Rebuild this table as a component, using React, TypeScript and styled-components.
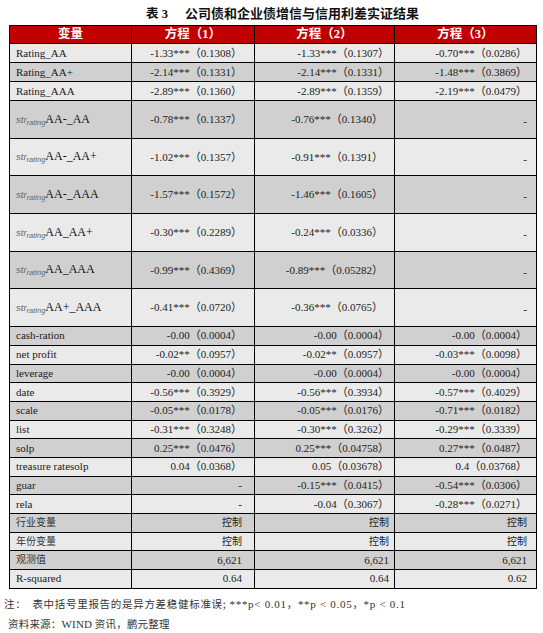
import styled, { createGlobalStyle } from 'styled-components'

const GlobalStyle = createGlobalStyle`
  html, body {
    margin: 0;
    padding: 0;
    background: #ffffff;
  }
  body {
    font-family: 'Liberation Serif', 'Noto Sans CJK SC', serif;
    color: #1a1a1a;
  }
`

type Row = {
  label: string
  str?: boolean
  cjk?: boolean
  values: string[]
}

const rows: Row[] = [
  { label: 'Rating_AA', values: ['-1.33***（0.1308）', '-1.33***（0.1307）', '-0.70***（0.0286）'] },
  { label: 'Rating_AA+', values: ['-2.14***（0.1331）', '-2.14***（0.1331）', '-1.48***（0.3869）'] },
  { label: 'Rating_AAA', values: ['-2.89***（0.1360）', '-2.89***（0.1359）', '-2.19***（0.0479）'] },
  { label: 'AA-_AA', str: true, values: ['-0.78***（0.1337）', '-0.76***（0.1340）', '-'] },
  { label: 'AA-_AA+', str: true, values: ['-1.02***（0.1357）', '-0.91***（0.1391）', '-'] },
  { label: 'AA-_AAA', str: true, values: ['-1.57***（0.1572）', '-1.46***（0.1605）', '-'] },
  { label: 'AA_AA+', str: true, values: ['-0.30***（0.2289）', '-0.24***（0.0336）', '-'] },
  { label: 'AA_AAA', str: true, values: ['-0.99***（0.4369）', '-0.89***（0.05282）', '-'] },
  { label: 'AA+_AAA', str: true, values: ['-0.41***（0.0720）', '-0.36***（0.0765）', '-'] },
  { label: 'cash-ration', values: ['-0.00（0.0004）', '-0.00（0.0004）', '-0.00（0.0004）'] },
  { label: 'net profit', values: ['-0.02**（0.0957）', '-0.02**（0.0957）', '-0.03***（0.0098）'] },
  { label: 'leverage', values: ['-0.00（0.0004）', '-0.00（0.0004）', '-0.00（0.0004）'] },
  { label: 'date', values: ['-0.56***（0.3929）', '-0.56***（0.3934）', '-0.57***（0.4029）'] },
  { label: 'scale', values: ['-0.05***（0.0178）', '-0.05***（0.0176）', '-0.71***（0.0182）'] },
  { label: 'list', values: ['-0.31***（0.3248）', '-0.30***（0.3262）', '-0.29***（0.3339）'] },
  { label: 'solp', values: ['0.25***（0.0476）', '0.25***（0.04758）', '0.27***（0.0487）'] },
  { label: 'treasure ratesolp', values: ['0.04（0.0368）', '0.05（0.03678）', '0.4（0.03768）'] },
  { label: 'guar', values: ['-', '-0.15***（0.0415）', '-0.54***（0.0306）'] },
  { label: 'rela', values: ['-', '-0.04（0.3067）', '-0.28***（0.0271）'] },
  { label: '行业变量', cjk: true, values: ['控制', '控制', '控制'] },
  { label: '年份变量', cjk: true, values: ['控制', '控制', '控制'] },
  { label: '观测值', cjk: true, values: ['6,621', '6,621', '6,621'] },
  { label: 'R-squared', values: ['0.64', '0.64', '0.62'] },
]

// right padding of each value column, normal rows / str rows
const padNormal = [12, 5, 9]
const padStr = [12, 11, 9]

const App = () => {
  return (
    <>
      <GlobalStyle />
      <Page>
        <Title>
          <span>表 3</span>
          <span>公司债和企业债增信与信用利差实证结果</span>
        </Title>
        <Table>
          <colgroup>
            <col style={{ width: 122 }} />
            <col style={{ width: 123 }} />
            <col style={{ width: 140 }} />
            <col style={{ width: 142 }} />
          </colgroup>
          <thead>
            <tr>
              <HeadCell>变量</HeadCell>
              <HeadCell>方程（1）</HeadCell>
              <HeadCell>方程（2）</HeadCell>
              <HeadCell>方程（3）</HeadCell>
            </tr>
          </thead>
          <tbody>
            {rows.map((r, i) => (
              <BodyRow key={r.label} $dark={i % 2 === 1} $tall={!!r.str} $upper={i < 3}>
                <LabelCell $cjk={!!r.cjk}>
                  {r.str ? (
                    <>
                      <Str>
                        str<Sub>rating</Sub>
                      </Str>
                      <StrName>{r.label}</StrName>
                    </>
                  ) : (
                    r.label
                  )}
                </LabelCell>
                {r.values.map((v, j) => (
                  <ValueCell
                    key={j}
                    $pad={r.str ? padStr[j] : padNormal[j]}
                    $cjk={v === '控制'}
                    $dash={!!r.str && v === '-'}
                  >
                    {v}
                  </ValueCell>
                ))}
              </BodyRow>
            ))}
          </tbody>
        </Table>
        <Note>
          注：<Gap />表中括号里报告的是异方差稳健标准误; <Latin>***p&lt; 0.01</Latin>，<Latin>**p &lt; 0.05</Latin>，
          <Latin>*p &lt; 0.1</Latin>
        </Note>
        <Source>
          资料来源：<Latin>WIND</Latin> 资讯，鹏元整理
        </Source>
      </Page>
    </>
  )
}

const Page = styled.div`
  width: 543px;
  height: 633px;
  overflow: hidden;
`

const Title = styled.div`
  height: 25px;
  display: flex;
  align-items: center;
  justify-content: center;
  gap: 17px;
  padding-left: 22px;
  font-family: 'Liberation Serif', 'Noto Sans CJK SC', serif;
  font-weight: 700;
  font-size: 13px;
  color: #111;
  span:first-child {
    font-size: 12.5px;
  }
`

const Table = styled.table`
  margin-left: 9px;
  width: 527px;
  table-layout: fixed;
  border-collapse: collapse;
  border: 1px solid #000;
`

const HeadCell = styled.th`
  height: 17px;
  padding: 0;
  background: #c00000;
  color: #ffffff;
  font-family: 'Liberation Serif', 'Noto Sans CJK SC', serif;
  font-weight: 700;
  font-size: 12.5px;
  text-align: center;
  border: 1px solid #000;
  line-height: 17px;
`

const BodyRow = styled.tr<{ $dark: boolean; $tall: boolean; $upper: boolean }>`
  height: ${(p) => (p.$tall ? '37.7px' : p.$upper ? '19px' : '18.7px')};
  background: ${(p) => (p.$dark ? '#d0d0d0' : '#eaeaea')};
`

const LabelCell = styled.td<{ $cjk: boolean }>`
  padding: 0 0 0 6px;
  border: 1px solid #000;
  font-size: ${(p) => (p.$cjk ? '10px' : '11px')};
  color: ${(p) => (p.$cjk ? '#333' : '#1a1a1a')};
  white-space: nowrap;
  line-height: 1;
`

const Str = styled.span`
  font-family: 'Liberation Sans', 'DejaVu Sans', sans-serif;
  font-style: italic;
  font-size: 9.5px;
  color: #666;
`

const Sub = styled.sub`
  font-size: 7.5px;
  vertical-align: -2px;
`

const StrName = styled.span`
  font-size: 12px;
  color: #111;
`

const ValueCell = styled.td<{ $pad: number; $cjk: boolean; $dash: boolean }>`
  padding: ${(p) => (p.$dash ? '4px' : '0')} ${(p) => p.$pad}px 0 0;
  border: 1px solid #000;
  text-align: right;
  font-size: ${(p) => (p.$cjk ? '10px' : '11px')};
  color: #222;
  white-space: nowrap;
  line-height: 1;
`

const Latin = styled.span`
  font-family: 'Liberation Serif', serif;
  font-size: 11px;
`

const Gap = styled.span`
  display: inline-block;
  width: 6px;
`

const Note = styled.div`
  margin: 7px 0 0 4px;
  font-family: 'Noto Sans CJK SC', sans-serif;
  font-size: 10.5px;
  letter-spacing: 0.7px;
  color: #333;
  white-space: nowrap;
`

const Source = styled.div`
  margin: 5px 0 0 8px;
  font-family: 'Noto Sans CJK SC', sans-serif;
  font-size: 10.5px;
  letter-spacing: 0.2px;
  color: #333;
  white-space: nowrap;
`

export default App
